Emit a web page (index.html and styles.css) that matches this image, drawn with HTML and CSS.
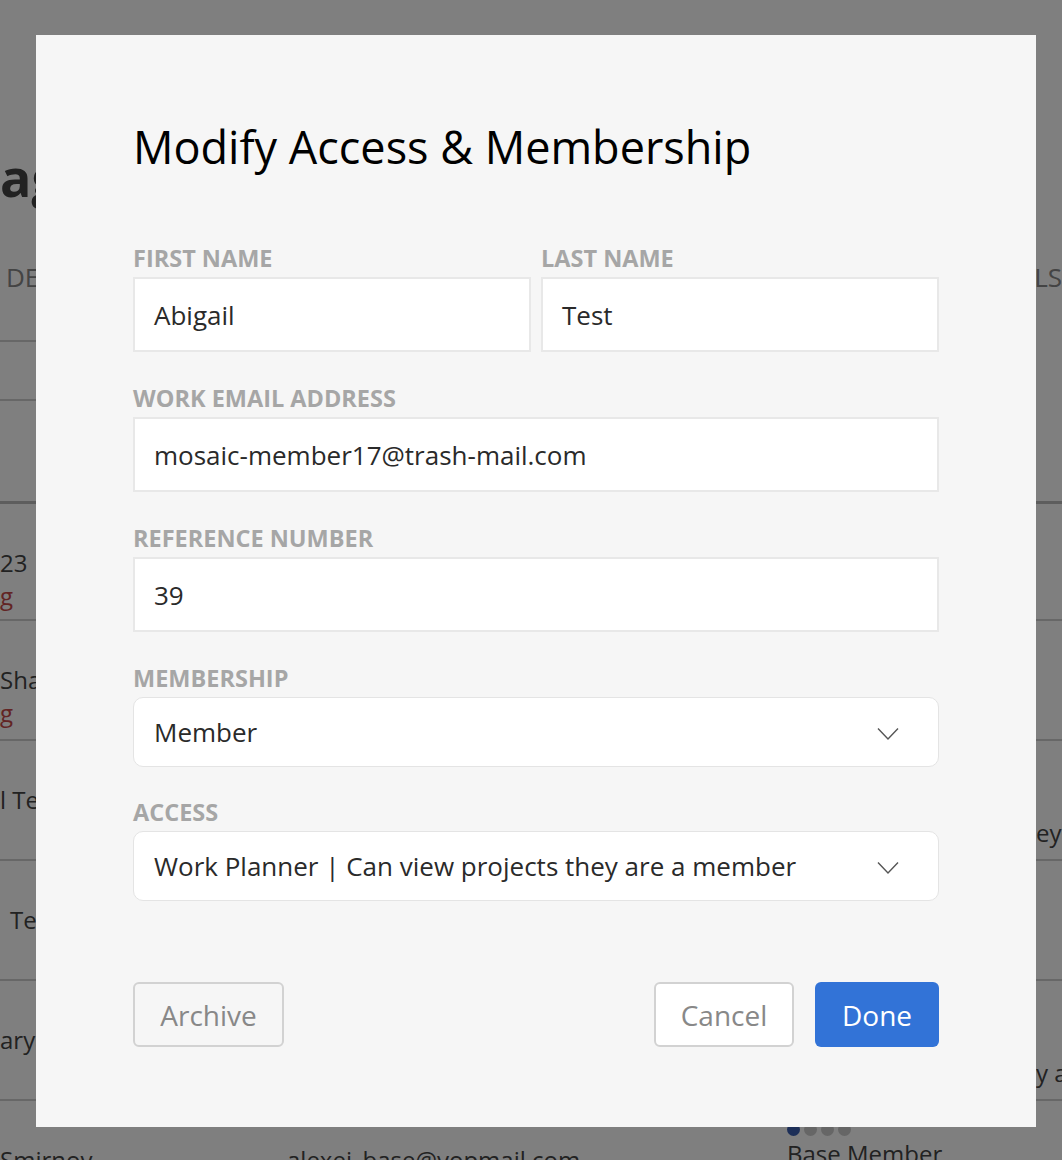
FILE: index.html
```html
<!DOCTYPE html>
<html lang="en">
<head>
<meta charset="utf-8">
<title>Modify Access &amp; Membership</title>
<link rel="stylesheet" href="styles.css">
</head>
<body>
<div class="page">
  <h1 class="page-title">ag</h1>
  <div class="col-head">
    <span class="col-head-left">DE</span>
    <span class="col-head-right">LS</span>
  </div>
  <div class="filter-row"></div>
  <div class="table">
    <div class="trow">
      <div class="cell name"><span>23</span><span class="pending">g</span></div>
      <div class="cell"></div><div class="cell"></div><div class="cell edge"></div>
    </div>
    <div class="trow">
      <div class="cell name"><span>Sha</span><span class="pending">g</span></div>
      <div class="cell"></div><div class="cell"></div><div class="cell edge"></div>
    </div>
    <div class="trow">
      <div class="cell name"><span>l Te</span></div>
      <div class="cell"></div><div class="cell"></div><div class="cell edge low">ey</div>
    </div>
    <div class="trow">
      <div class="cell name indent"><span>Te</span></div>
      <div class="cell"></div><div class="cell"></div><div class="cell edge"></div>
    </div>
    <div class="trow">
      <div class="cell name"><span>arya</span></div>
      <div class="cell"></div><div class="cell"></div><div class="cell edge low">y a</div>
    </div>
    <div class="trow last">
      <div class="cell name"><span>Smirnov</span></div>
      <div class="cell">alexei_base@yopmail.com</div>
      <div class="cell role">
        <span class="dots"><i class="dot on"></i><i class="dot"></i><i class="dot"></i><i class="dot"></i></span>
        <span>Base Member</span>
      </div>
      <div class="cell edge"></div>
    </div>
  </div>
</div>

<div class="overlay">
  <div class="modal">
    <h2 class="modal-title">Modify Access &amp; Membership</h2>
    <form class="form">
      <div class="two-col">
        <div class="field">
          <label class="label">FIRST NAME</label>
          <div class="input">Abigail</div>
        </div>
        <div class="field">
          <label class="label">LAST NAME</label>
          <div class="input">Test</div>
        </div>
      </div>
      <div class="field">
        <label class="label">WORK EMAIL ADDRESS</label>
        <div class="input">mosaic-member17@trash-mail.com</div>
      </div>
      <div class="field">
        <label class="label">REFERENCE NUMBER</label>
        <div class="input">39</div>
      </div>
      <div class="field">
        <label class="label">MEMBERSHIP</label>
        <div class="select">
          <span>Member</span>
          <svg class="chev" width="22" height="14" viewBox="0 0 22 14"><polyline points="1,1.5 11,12 21,1.5" fill="none" stroke="#555" stroke-width="1.4"/></svg>
        </div>
      </div>
      <div class="field field-access">
        <label class="label">ACCESS</label>
        <div class="select">
          <span>Work Planner | Can view projects they are a member</span>
          <svg class="chev" width="22" height="14" viewBox="0 0 22 14"><polyline points="1,1.5 11,12 21,1.5" fill="none" stroke="#555" stroke-width="1.4"/></svg>
        </div>
      </div>
      <div class="actions">
        <button type="button" class="btn btn-archive">Archive</button>
        <div class="actions-right">
          <button type="button" class="btn btn-cancel">Cancel</button>
          <button type="button" class="btn btn-done">Done</button>
        </div>
      </div>
    </form>
  </div>
</div>
</body>
</html>
```

FILE: styles.css
```css
* { box-sizing: border-box; }

html, body {
  margin: 0;
  padding: 0;
  width: 1062px;
  height: 1160px;
  overflow: hidden;
  background: #ffffff;
  font-family: "Open Sans", "Noto Sans", "Liberation Sans", sans-serif;
}

/* background page */
.page {
  width: 1062px;
  height: 1160px;
  overflow: hidden;
  color: #444;
}

.page-title {
  margin: 0;
  padding-top: 142px;
  height: 236px;
  font-size: 52px;
  line-height: 70px;
  font-weight: 700;
  color: #444;
}

.col-head {
  display: flex;
  justify-content: space-between;
  font-size: 26px;
  line-height: 36px;
  color: #888;
  height: 104px;
  padding-top: 23px;
}
.col-head-left { padding-left: 6px; }

.filter-row {
  height: 61px;
  width: 60px;
  border-top: 2px solid #cfcfcf;
  border-bottom: 2px solid #cfcfcf;
}

.table {
  margin-top: 100px;
  border-top: 3px solid #bbb;
}

.trow {
  display: grid;
  grid-template-columns: 287px 500px 249px 26px;
  height: 120px;
  border-bottom: 2px solid #cfcfcf;
  font-size: 24px;
  line-height: 33px;
  color: #444;
}
.trow:first-child { height: 117px; }
.trow.last { border-bottom: none; }

.cell {
  display: flex;
  flex-direction: column;
  justify-content: flex-start;
  padding-top: 42px;
  white-space: nowrap;
  overflow: hidden;
}
.cell.indent { padding-left: 10px; }
.cell.low { padding-top: 75px; }
.pending { color: #c44848; }

.cell.role { padding-top: 20px; }
.dots { display: flex; gap: 4px; height: 16px; align-items: center; }
.dot { display: block; width: 13px; height: 13px; border-radius: 50%; background: #ccc; }
.dot.on { background: #3a5fb0; }

/* overlay and modal */
.overlay {
  position: fixed;
  inset: 0;
  background: rgba(0, 0, 0, 0.5);
  padding: 35px 0 0 36px;
}

.modal {
  width: 1000px;
  height: 1092px;
  background: #f6f6f6;
  padding: 82px 97px 81px 97px;
}

.modal-title {
  margin: 0 0 69px 0;
  font-size: 45px;
  line-height: 60px;
  font-weight: 500;
  color: #000;
}

.form {
  display: flex;
  flex-direction: column;
  gap: 34px;
}

.two-col {
  display: grid;
  grid-template-columns: 1fr 1fr;
  gap: 10px;
}

.field {
  display: flex;
  flex-direction: column;
}

.field-access { margin-top: -1px; }

.label {
  font-size: 23.5px;
  line-height: 24px;
  font-weight: 700;
  color: #a6a6a6;
  margin-bottom: 7px;
}

.input {
  height: 75px;
  background: #fff;
  border: 2px solid #e8e8e8;
  padding: 0 19px;
  display: flex;
  align-items: center;
  font-size: 26px;
  color: #2a2a2a;
}

.select {
  height: 70px;
  background: #fff;
  border: 1px solid #e4e4e4;
  border-radius: 10px;
  padding: 0 39px 0 20px;
  display: flex;
  align-items: center;
  justify-content: space-between;
  font-size: 26px;
  color: #2a2a2a;
}

.chev { display: block; margin-top: 3px; }

.actions {
  margin-top: 47px;
  display: flex;
  justify-content: space-between;
  align-items: center;
}

.actions-right {
  display: flex;
  gap: 21px;
}

.btn {
  height: 65px;
  border-radius: 6px;
  font-family: "Open Sans", "Noto Sans", "Liberation Sans", sans-serif;
  font-size: 28px;
  padding: 0;
  cursor: pointer;
}

.btn-archive {
  width: 151px;
  background: transparent;
  border: 2px solid #d2d2d2;
  color: #888;
}

.btn-cancel {
  width: 140px;
  background: #fff;
  border: 2px solid #d2d2d2;
  color: #888;
}

.btn-done {
  width: 124px;
  background: #3273d7;
  border: none;
  color: #fff;
}
```
